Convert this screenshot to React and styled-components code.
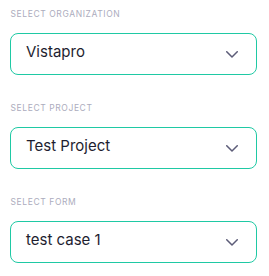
import React from "react";
import styled, { createGlobalStyle } from "styled-components";

const Global = createGlobalStyle`
  html, body { margin: 0; padding: 0; background: #ffffff; }
  body { font-family: Inter, "Noto Sans", sans-serif; }
`;

const Panel = styled.div`
  display: flex;
  flex-direction: column;
  gap: 28px;
  padding: 9px 12px 0 10px;
  width: 247px;
`;

const Field = styled.div`
  display: flex;
  flex-direction: column;
  gap: 13px;
`;

const Label = styled.div`
  font-size: 8.5px;
  line-height: 11px;
  letter-spacing: 0.6px;
  color: #acacbd;
  text-transform: uppercase;
  padding-left: 0.5px;
`;

const SelectBox = styled.div`
  box-sizing: border-box;
  height: 42px;
  border: 1.5px solid #1fc9a4;
  border-radius: 8px;
  display: flex;
  align-items: center;
  justify-content: space-between;
  padding: 0 18.5px 0 15px;
  background: #fff;
`;

const Value = styled.span`
  font-size: 15px;
  line-height: 18px;
  color: #1e1e30;
  margin-bottom: 5px;
`;

const Chevron = () => (
  <svg width="12" height="7" viewBox="0 0 12 7" fill="none">
    <path d="M0.75 0.75 L6 6 L11.25 0.75" stroke="#5c5c78" strokeWidth="1.5" strokeLinecap="round" strokeLinejoin="round" />
  </svg>
);

const fields = [
  { label: "Select Organization", value: "Vistapro" },
  { label: "Select Project", value: "Test Project" },
  { label: "Select Form", value: "test case 1" },
];

export default function App() {
  return (
    <>
      <Global />
      <Panel>
        {fields.map((f) => (
          <Field key={f.label}>
            <Label>{f.label}</Label>
            <SelectBox>
              <Value>{f.value}</Value>
              <Chevron />
            </SelectBox>
          </Field>
        ))}
      </Panel>
    </>
  );
}
